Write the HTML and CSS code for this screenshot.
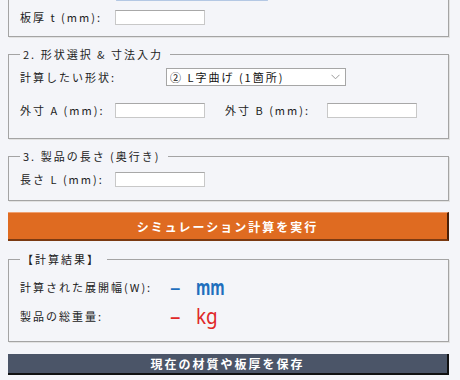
FILE: index.html
```html
<html>
    <head>
        <title>板金展開シミュレーション</title>
        <meta charset="UTF-8"><meta name="viewport"
            content="width=device-width, initial-scale=1.0">
        <link rel="stylesheet" href="styles.css">
</head><body>
        <main class="page">
            <fieldset class="group group-first">
                <div class="row row-material">
                    <div class="fake-select"></div>
                </div>
                <div class="row">
                    <label class="label-short">板厚 t (mm):</label>
                    <input type="text" class="num-input">
                </div>
            </fieldset>

            <fieldset class="group group-shape">
                <legend>2. 形状選択 &amp; 寸法入力</legend>
                <div class="row">
                    <label class="label-long">計算したい形状:</label>
                    <div class="select-wrap">
                        <select class="shape-select">
                            <option>② L字曲げ (1箇所)</option>
                        </select>
                        <svg class="chevron" width="9" height="6" viewBox="0 0 9 6">
                            <path d="M0.5 0.8 L4.5 4.8 L8.5 0.8" fill="none" stroke="#9a9a9a" stroke-width="1"/>
                        </svg>
                    </div>
                </div>
                <div class="row row-dims">
                    <label class="label-short">外寸 A (mm):</label>
                    <input type="text" class="num-input">
                    <label class="label-b">外寸 B (mm):</label>
                    <input type="text" class="num-input">
                </div>
            </fieldset>

            <fieldset class="group group-length">
                <legend>3. 製品の長さ (奥行き)</legend>
                <div class="row">
                    <label class="label-short">長さ L (mm):</label>
                    <input type="text" class="num-input">
                </div>
            </fieldset>

            <button class="run-button">シミュレーション計算を実行</button>

            <fieldset class="group group-result">
                <legend>【計算結果】</legend>
                <div class="result-row">
                    <span class="result-label">計算された展開幅(W):</span>
                    <span class="result-value width-value"><span class="dash">–</span><span class="unit unit-mm">mm</span></span>
                </div>
                <div class="result-row">
                    <span class="result-label">製品の総重量:</span>
                    <span class="result-value weight-value"><span class="dash">–</span><span class="unit">kg</span></span>
                </div>
            </fieldset>

            <button class="save-button">現在の材質や板厚を保存</button>
        </main>
    </body></html>
```

FILE: styles.css
```css
body {
    font-family: "Noto Sans CJK JP", "Noto Sans", sans-serif;
    font-size: 11px;
    margin: 0;
    padding: 0 11px 0 8px;
    background-color: #f4f5f9;
    color: #222;
    overflow: hidden;
}
.page {
    margin-top: -20px;
}
.group {
    margin: 0 0 9px 0;
    padding: 4px 11px 0 11px;
    border: 1px solid #a4a4a4;
    box-shadow: 1px 1px 0 #e2e2e2;
}
legend {
    padding: 0 7px 0 3px;
    letter-spacing: 2px;
    line-height: 16px;
    color: #222;
}
.row {
    display: flex;
    align-items: center;
    height: 18px;
    letter-spacing: 2px;
}
.row-material {
    height: 20px;
    margin-bottom: 7px;
    align-items: flex-start;
}
.fake-select {
    margin-left: 96px;
    width: 150px;
    height: 17px;
    border: 1px solid #c9d6e8;
    border-bottom: 2px solid #b4c8e4;
    background: #eef2f8;
}
.group-first {
    padding-top: 0;
    padding-bottom: 10px;
}
.label-short {
    width: 95px;
}
.label-long {
    width: 146px;
}
.label-b {
    margin-left: 20px;
    width: 102px;
}
.num-input {
    width: 90px;
    height: 15px;
    box-sizing: border-box;
    padding: 0;
    border: 1px solid #c8c8c8;
    border-top-color: #a8a8a8;
    background: #fff;
}
.select-wrap {
    position: relative;
    width: 180px;
    height: 18px;
}
.shape-select {
    -webkit-appearance: none;
    appearance: none;
    width: 180px;
    height: 18px;
    font-family: inherit;
    font-size: 11px;
    letter-spacing: 2px;
    padding: 0 3px;
    border: 1px solid #a6a6a6;
    border-radius: 0;
    background: #fff;
    color: #111;
}
.chevron {
    position: absolute;
    right: 6px;
    top: 6px;
}
.group-shape {
    padding-top: 6px;
    padding-bottom: 19px;
}
.row-dims {
    margin-top: 15px;
}
.group-length {
    padding-top: 6px;
    padding-bottom: 12px;
}
.run-button {
    display: block;
    width: 100%;
    height: 29px;
    margin: 11px 0 10px 0;
    background-color: #df6b21;
    color: #fff;
    font-family: inherit;
    font-size: 12px;
    font-weight: bold;
    letter-spacing: 2px;
    border: none;
    border-top: 1px solid #f0a070;
    border-bottom: 2px solid #7b3a12;
    border-right: 2px solid #4a2008;
    cursor: pointer;
}
.group-result {
    padding: 8px 11px 13px 11px;
    margin-bottom: 12px;
}
.group-result legend {
    padding-left: 2px;
}
.result-row {
    display: flex;
    align-items: center;
    height: 24px;
    letter-spacing: 2px;
}
.result-row + .result-row {
    margin-top: 5px;
}
.result-label {
    width: 150px;
}
.result-value {
    font-family: "Noto Sans", sans-serif;
    font-size: 21px;
    letter-spacing: 0;
    white-space: nowrap;
}
.dash {
    display: inline-block;
    width: 26px;
    font-weight: normal;
}
.unit {
    display: inline-block;
    transform-origin: left center;
    transform: scaleX(0.9);
}
.unit-mm {
    transform: scaleX(0.7);
}
.width-value {
    color: #1f6fbd;
    font-weight: bold;
}
.weight-value {
    color: #e02828;
}
.save-button {
    display: block;
    width: 100%;
    height: 21px;
    background-color: #4b5568;
    color: #fff;
    font-family: inherit;
    font-size: 12px;
    font-weight: bold;
    letter-spacing: 2px;
    border: none;
    border-bottom: 2px solid #111;
    border-right: 2px solid #111;
    cursor: pointer;
}
```
